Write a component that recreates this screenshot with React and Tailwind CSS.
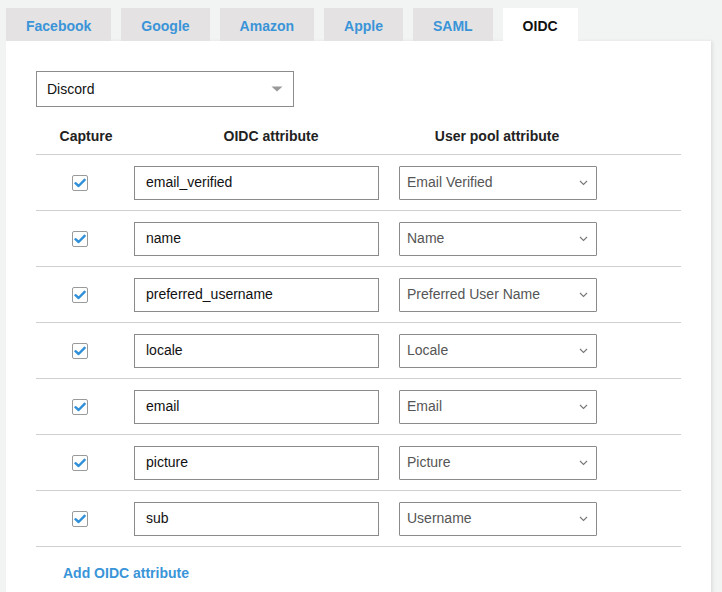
import React from "react";

const tabs = ["Facebook", "Google", "Amazon", "Apple", "SAML", "OIDC"];
const rows = [
  ["email_verified", "Email Verified"],
  ["name", "Name"],
  ["preferred_username", "Preferred User Name"],
  ["locale", "Locale"],
  ["email", "Email"],
  ["picture", "Picture"],
  ["sub", "Username"],
];

function Check() {
  return (
    <div className="w-4 h-4 border border-[#9a9a9a] rounded-[2px] bg-white flex items-center justify-center">
      <svg width="12" height="10" viewBox="0 0 12 10">
        <path d="M1.5 5.2 L4.6 8 L10.6 1.8" fill="none" stroke="#2f8fd8" strokeWidth="2.4" strokeLinecap="round" strokeLinejoin="round" />
      </svg>
    </div>
  );
}

export default function App() {
  return (
    <div className="w-[722px] h-[592px] overflow-hidden bg-[#f2f3f3] text-[14px] text-[#111]" style={{ fontFamily: '"Liberation Sans", Arial, sans-serif' }}>
      <div className="flex gap-[10px] pl-[6px] pt-[8px]">
        {tabs.map((t) => (
          <div
            key={t}
            className={
              "h-[33px] px-5 pt-[4px] flex items-center font-bold text-[14px] " +
              (t === "OIDC" ? "bg-white text-[#111]" : "bg-[#e4e2e3] text-[#3a94d8]")
            }
          >
            {t}
          </div>
        ))}
      </div>
      <div className="ml-[6px] w-[705px] h-[560px] bg-white shadow-[2px_0_3px_rgba(0,0,0,0.08)] px-[30px] pt-[30px]">
        <div className="w-[258px] h-[36px] border border-[#8c8c8c] flex items-center justify-between pl-[10px] pr-[10px]">
          <span className="text-[14px] text-[#111]">Discord</span>
          <svg width="12" height="6" viewBox="0 0 12 6">
            <path d="M0.5 0.5 H11.5 L6 5.5 Z" fill="#999" />
          </svg>
        </div>
        <div className="w-[645px]">
          <div className="flex pt-[19px] pb-[8px] border-b border-[#cfcfcf] font-bold text-[14px] leading-[20px] text-[#222]">
            <div className="w-[100px] text-center">Capture</div>
            <div className="w-[270px] text-center">OIDC attribute</div>
            <div className="w-[182px] text-center">User pool attribute</div>
          </div>
          {rows.map(([a, b]) => (
            <div key={a} className="h-[56px] flex items-center border-b border-[#cfcfcf]">
              <div className="ml-[36px]">
                <Check />
              </div>
              <div className="ml-[46px] w-[245px] h-[34px] border border-[#8a8a8a] flex items-center pl-[11px] text-[14px] text-[#111]">
                {a}
              </div>
              <div className="ml-[20px] w-[198px] h-[34px] border border-[#8a8a8a] rounded-[1px] flex items-center justify-between pl-[7px] pr-[8px] text-[14px] text-[#555]">
                <span>{b}</span>
                <svg width="9" height="6" viewBox="0 0 9 6">
                  <path d="M1 1 L4.5 4.5 L8 1" fill="none" stroke="#777" strokeWidth="1.1" />
                </svg>
              </div>
            </div>
          ))}
          <div className="mt-[16px] ml-[27px] font-bold text-[14px] leading-[20px] text-[#3a94d8]">Add OIDC attribute</div>
        </div>
      </div>
    </div>
  );
}
